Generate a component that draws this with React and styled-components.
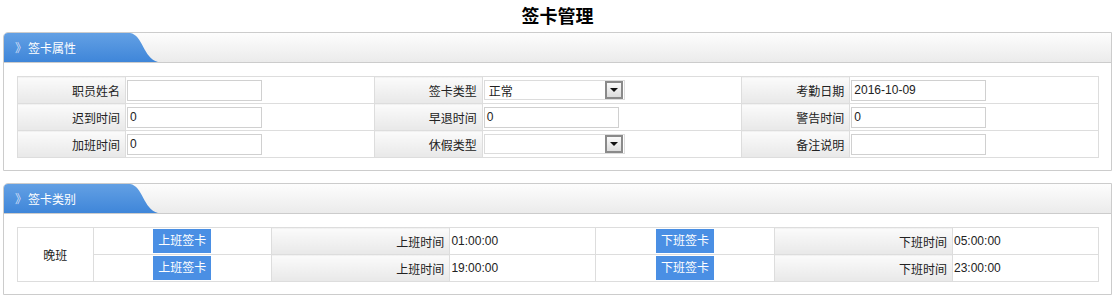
import React from "react";
import styled, { createGlobalStyle } from "styled-components";

const GlobalStyle = createGlobalStyle`
  body {
    margin: 0;
    background: #fff;
    font-family: "Liberation Sans", "Noto Sans CJK SC", sans-serif;
    font-size: 12px;
    color: #222;
  }
`;

const Page = styled.div`
  padding: 0 5px 0 3px;
`;

const Title = styled.h1`
  margin: 0;
  height: 32px;
  line-height: 34px;
  text-align: center;
  font-size: 18px;
  font-weight: bold;
  color: #000;
`;

const Panel = styled.div`
  border: 1px solid #ccc;
  border-top-left-radius: 5px;
  overflow: hidden;
  margin-bottom: 12px;
`;

const PanelHead = styled.div`
  height: 29px;
  border-bottom: 1px solid #ccc;
  background: linear-gradient(#fdfdfd, #ebebeb);
  display: flex;
`;

const Tab = styled.div`
  width: 154px;
  height: 29px;
  display: flex;
  align-items: center;
  padding-left: 11px;
  box-sizing: border-box;
  color: #fff;
  background: linear-gradient(#63a0e4, #3f86d9);
  clip-path: path("M0 29 L0 0 L126 0 C139 2 139 25 154 29 Z");
`;

const Chevron = styled.span`
  color: rgba(235, 240, 255, 0.85);
  font-size: 12px;
  width: 12px;
  margin-right: 1px;
  display: inline-block;
  text-align: center;
`;

const PanelBody = styled.div`
  padding: 13px 12px 12px 13px;
`;

const Grid = styled.table`
  width: 100%;
  border-collapse: collapse;
  table-layout: fixed;
`;

const Col = styled.col`
  width: ${p => p.$w};
`;

const Row = styled.tr`
  height: 27px;
`;

const Cell = styled.td`
  border: 1px solid #ddd;
  padding: 0 1px;
  white-space: nowrap;
  text-align: ${p => p.$align || "left"};
`;

const Label = styled(Cell)`
  text-align: right;
  padding-right: 5px;
  background: linear-gradient(#fbfbfb, #e8e8e8);
`;

const Input = styled.div`
  width: 135px;
  height: 21px;
  box-sizing: border-box;
  border: 1px solid #d0d0d0;
  padding-left: 2px;
  line-height: 19px;
  background: #fff;
`;

const Select = styled.div`
  width: 141px;
  height: 20px;
  box-sizing: border-box;
  border: 1px solid #dcdcdc;
  display: flex;
  align-items: center;
  justify-content: space-between;
  padding: 0 1px 0 4px;
`;

const Arrow = styled.span`
  width: 18px;
  height: 18px;
  box-sizing: border-box;
  border: 2px solid #8a8a8a;
  background: linear-gradient(#fafafa, #dcdcdc);
  display: flex;
  align-items: center;
  justify-content: center;

  &::after {
    content: "";
    border-left: 4px solid transparent;
    border-right: 4px solid transparent;
    border-top: 4px solid #111;
  }
`;

const Btn = styled.span`
  display: inline-block;
  width: 58px;
  height: 24px;
  line-height: 24px;
  text-align: center;
  background: #4a8fe4;
  color: #fff;
  vertical-align: middle;
`;

function PanelBox({ title, children }) {
  return (
    <Panel>
      <PanelHead>
        <Tab>
          <Chevron>》</Chevron>
          {title}
        </Tab>
      </PanelHead>
      <PanelBody>{children}</PanelBody>
    </Panel>
  );
}

const attrRows = [
  [
    ["职员姓名", "input", ""],
    ["签卡类型", "select", "正常"],
    ["考勤日期", "input", "2016-10-09"]
  ],
  [
    ["迟到时间", "input", "0"],
    ["早退时间", "input", "0"],
    ["警告时间", "input", "0"]
  ],
  [
    ["加班时间", "input", "0"],
    ["休假类型", "select", ""],
    ["备注说明", "input", ""]
  ]
];

const attrCols = ["10%", "23%", "10%", "24%", "10%", "23%"];
const shiftCols = ["7%", "16.5%", "16.5%", "13.5%", "16.5%", "16.5%", "13.5%"];

const shifts = [
  { start: "01:00:00", end: "05:00:00" },
  { start: "19:00:00", end: "23:00:00" }
];

export default function App() {
  return (
    <Page>
      <GlobalStyle />
      <Title>签卡管理</Title>

      <PanelBox title="签卡属性">
        <Grid>
          <colgroup>
            {attrCols.map((w, i) => (
              <Col key={i} $w={w} />
            ))}
          </colgroup>
          <tbody>
            {attrRows.map((row, i) => (
              <Row key={i}>
                {row.map(([label, kind, value]) => (
                  <React.Fragment key={label}>
                    <Label>{label}</Label>
                    <Cell>
                      {kind === "select" ? (
                        <Select>
                          <span>{value}</span>
                          <Arrow />
                        </Select>
                      ) : (
                        <Input>{value}</Input>
                      )}
                    </Cell>
                  </React.Fragment>
                ))}
              </Row>
            ))}
          </tbody>
        </Grid>
      </PanelBox>

      <PanelBox title="签卡类别">
        <Grid>
          <colgroup>
            {shiftCols.map((w, i) => (
              <Col key={i} $w={w} />
            ))}
          </colgroup>
          <tbody>
            {shifts.map((s, i) => (
              <Row key={i}>
                {i === 0 && (
                  <Cell rowSpan={2} $align="center">
                    晚班
                  </Cell>
                )}
                <Cell $align="center">
                  <Btn>上班签卡</Btn>
                </Cell>
                <Label>上班时间</Label>
                <Cell>{s.start}</Cell>
                <Cell $align="center">
                  <Btn>下班签卡</Btn>
                </Cell>
                <Label>下班时间</Label>
                <Cell>{s.end}</Cell>
              </Row>
            ))}
          </tbody>
        </Grid>
      </PanelBox>
    </Page>
  );
}
